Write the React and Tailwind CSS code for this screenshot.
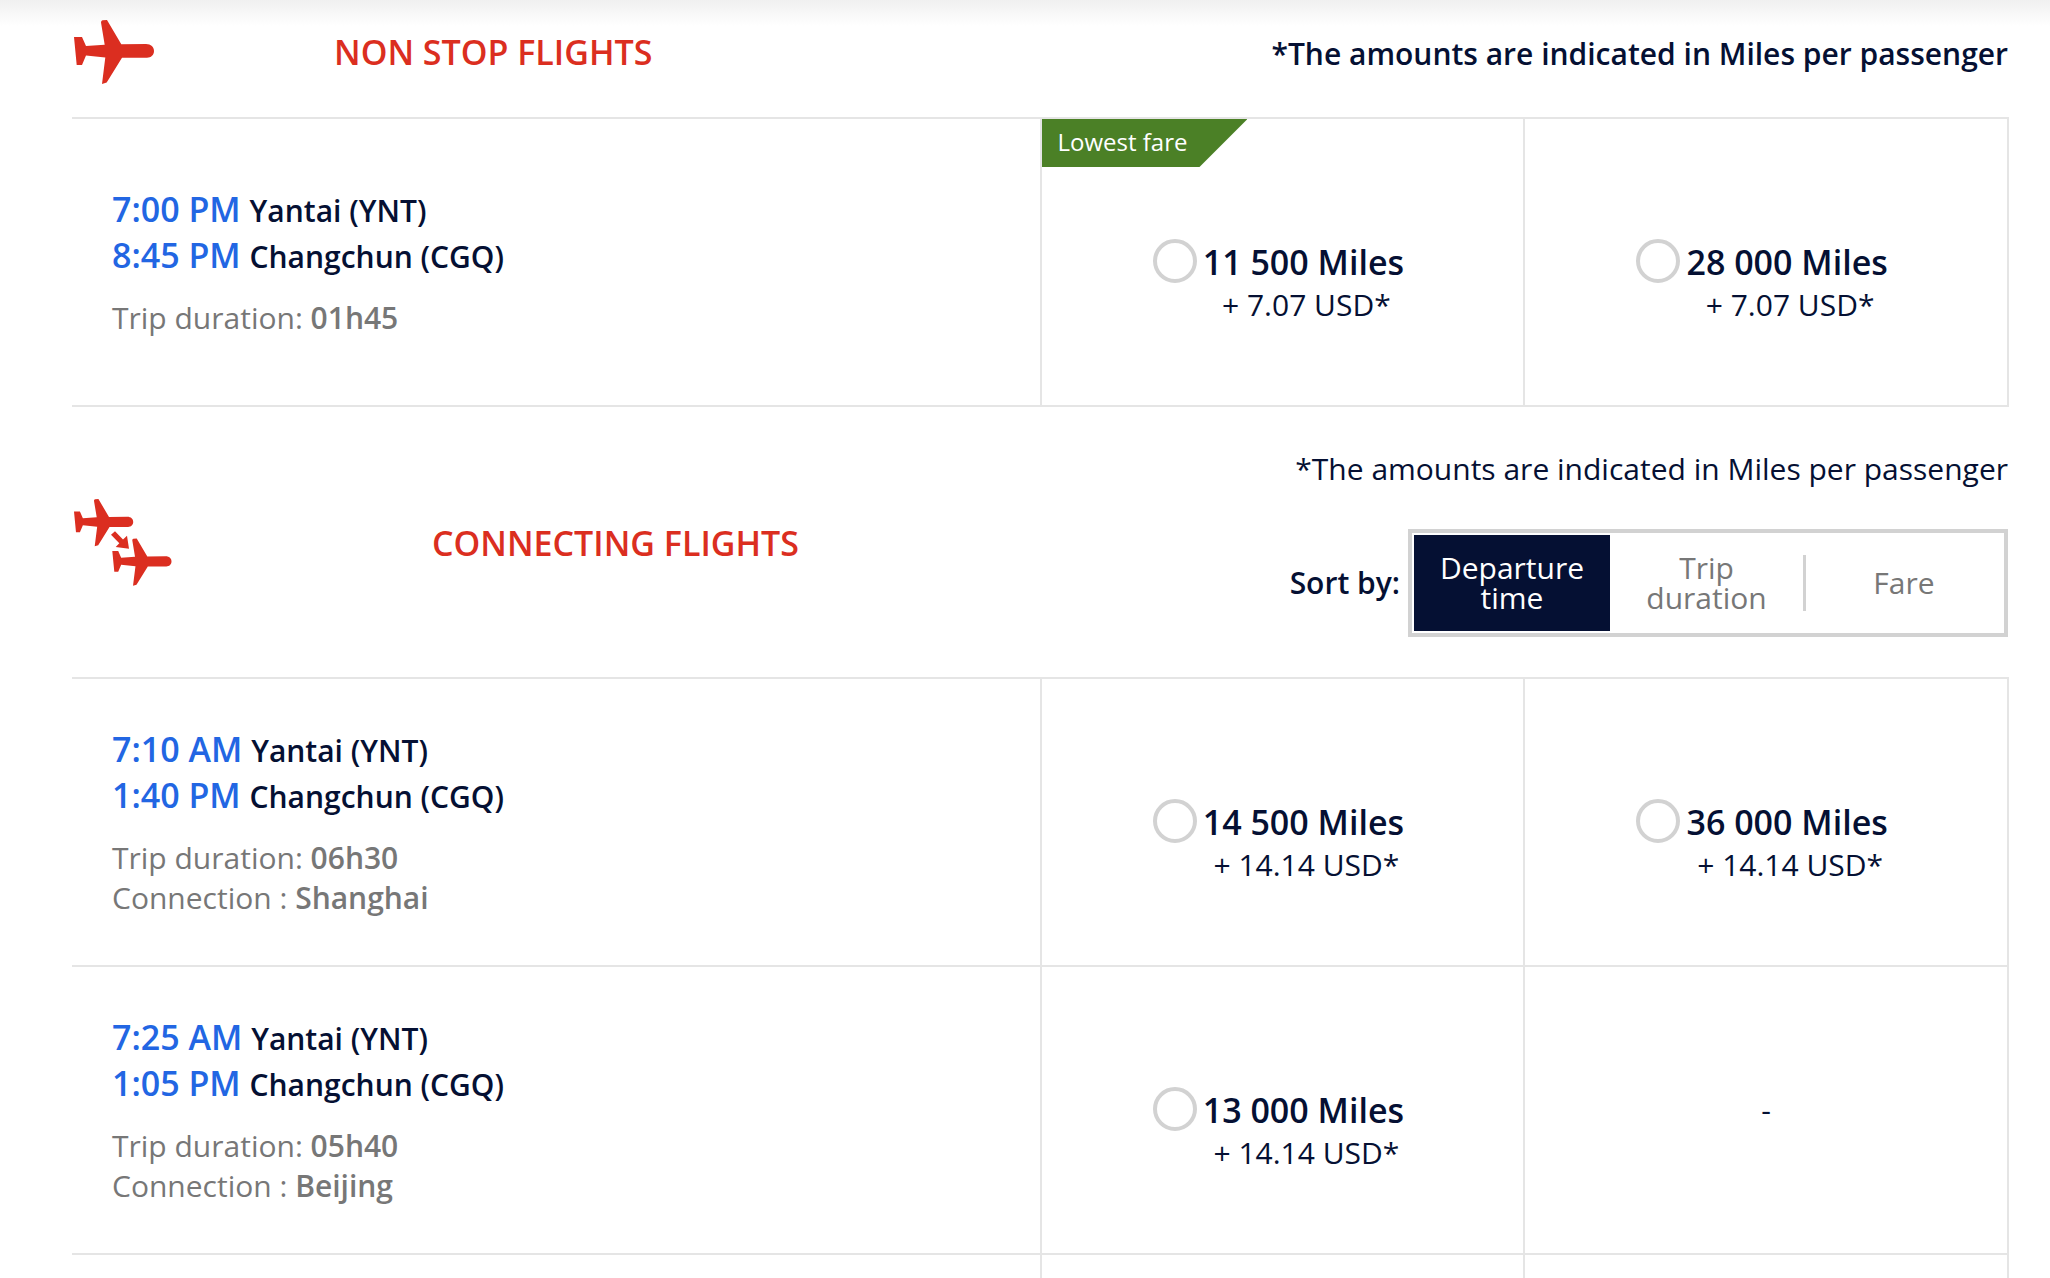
import { useState } from "react";

const PLANE =
  "M0 17H8L12 26L30.7 24.7L27 2.5Q27 .6 28.5 .3L33 0L47.3 24.3L72 24C77 24 80 27 80 31C80 35 77 37.7 73 37.7L48 37.8L32.7 62.4L28 64L31.3 37.6L12 35.5L8 45H2.7Z";

function PlaneIcon() {
  return (
    <svg viewBox="0 0 80 64" className="h-16 w-20 shrink-0 fill-[#db2e20]" aria-hidden="true">
      <path d={PLANE} />
    </svg>
  );
}

function ConnectingPlanesIcon() {
  return (
    <svg viewBox="0 0 98 88" className="h-[88px] w-[98px] shrink-0 fill-[#db2e20]" aria-hidden="true">
      <path d={PLANE} transform="scale(.74)" />
      <path d={PLANE} transform="translate(38.3 39.5) scale(.74)" />
      <path d="M41 32.3L49 40.5L53 36.7L55 49.7L41.7 48L45.3 44.3L37 35.7Z" />
    </svg>
  );
}

function Price({ name, miles, taxes }) {
  return (
    <label className="flex items-start justify-center gap-1.5 pt-10 pr-2">
      <input
        type="radio"
        name={name}
        className="size-11 shrink-0 appearance-none rounded-full border-4 border-[#d2d2d2] bg-white checked:bg-[#051033]"
      />
      <span className="block text-center">
        <span className="block text-[34px] leading-[46px] font-semibold">{miles} Miles</span>
        <span className="block pl-1.5 text-[30px] leading-10">+ {taxes} USD*</span>
      </span>
    </label>
  );
}

function FlightTable({ name, label, flights, children }) {
  return (
    <div className="border-t-2 border-r-2 border-[#e5e5e5]">
      <table aria-label={label} className="w-full table-fixed border-separate border-spacing-0">
        <colgroup>
          <col className="w-[calc(50%-1px)]" />
          <col className="w-1/4" />
          <col className="w-1/4" />
        </colgroup>
        <tbody>
          {flights.map((f) => (
            <tr key={f.depart} className="h-72">
              <td className="border-b-2 border-[#e5e5e5] pl-10 align-middle">
                {[
                  [f.depart, "Yantai (YNT)"],
                  [f.arrive, "Changchun (CGQ)"],
                ].map(([time, place]) => (
                  <p key={place} className="text-[34px] leading-[46px] font-semibold">
                    <span className="text-[#2266e3]">{time}</span> <span className="text-[30px] leading-10">{place}</span>
                  </p>
                ))}
                <div className="mt-5 text-[30px] leading-10 text-[#777777]">
                  <p>
                    Trip duration: <b className="font-semibold">{f.duration}</b>
                  </p>
                  {f.via && (
                    <p>
                      Connection : <b className="font-semibold">{f.via}</b>
                    </p>
                  )}
                </div>
              </td>
              {f.prices.map((p, i) => (
                <td key={i} className="relative border-b-2 border-l-2 border-[#e5e5e5] text-center align-middle text-[30px] leading-10">
                  {p && p.lowest && (
                    <span className="absolute top-0 left-0 bg-[#4b8026] pr-15 pb-0.5 pl-4 text-2xl leading-[46px] text-white [clip-path:polygon(0_0,100%_0,calc(100%-48px)_100%,0_100%)]">
                      Lowest fare
                    </span>
                  )}
                  {p ? <Price name={name} miles={p.miles} taxes={p.taxes} /> : "-"}
                </td>
              ))}
            </tr>
          ))}
          {children}
        </tbody>
      </table>
    </div>
  );
}

const nonStop = [
  {
    depart: "7:00 PM",
    arrive: "8:45 PM",
    duration: "01h45",
    prices: [
      { miles: "11 500", taxes: "7.07", lowest: true },
      { miles: "28 000", taxes: "7.07" },
    ],
  },
];

const connecting = [
  {
    depart: "7:10 AM",
    arrive: "1:40 PM",
    duration: "06h30",
    via: "Shanghai",
    prices: [
      { miles: "14 500", taxes: "14.14" },
      { miles: "36 000", taxes: "14.14" },
    ],
  },
  {
    depart: "7:25 AM",
    arrive: "1:05 PM",
    duration: "05h40",
    via: "Beijing",
    prices: [{ miles: "13 000", taxes: "14.14" }, null],
  },
];

const sorts = ["Departure time", "Trip duration", "Fare"];

export default function App() {
  const [sort, setSort] = useState(0);
  return (
    <main className="bg-white bg-linear-to-b from-[#f0f0f0] from-0% to-white to-[26px] pr-[41px] pl-[72px] font-['Open_Sans',sans-serif] text-[#051033]">
      <section>
        <header className="flex items-center pt-5 pr-px pb-[33px] pl-0.5">
          <PlaneIcon />
          <div className="flex flex-1 items-baseline justify-between pl-[180px]">
            <h2 className="text-[34px] leading-[46px] font-semibold text-[#db2e20]">NON STOP FLIGHTS</h2>
            <p className="text-[30px] leading-10 font-semibold">*The amounts are indicated in Miles per passenger</p>
          </div>
        </header>
        <FlightTable name="non-stop" label="Non stop flights" flights={nonStop} />
      </section>

      <section>
        <header className="flex items-center justify-between pt-[42px] pr-px pb-10 pl-0.5">
          <div className="flex items-center">
            <ConnectingPlanesIcon />
            <h2 className="pl-[260px] text-[34px] leading-[46px] font-semibold text-[#db2e20]">CONNECTING FLIGHTS</h2>
          </div>
          <div className="flex flex-col items-end gap-10">
            <p className="text-[30px] leading-10">*The amounts are indicated in Miles per passenger</p>
            <div className="flex items-center gap-2">
              <span id="sort-label" className="text-[30px] leading-10 font-semibold">Sort by:</span>
              <div role="group" aria-labelledby="sort-label" className="flex h-[108px] w-[600px] items-center border-4 border-[#d2d2d2] p-0.5">
                {sorts.map((s, i) => (
                  <button
                    key={s}
                    type="button"
                    aria-pressed={sort === i}
                    onClick={() => setSort(i)}
                    className={
                      "flex flex-1 items-center justify-center self-stretch text-[30px] leading-[30px] " +
                      (sort === i ? "bg-[#051033] text-white" : "text-[#777777]")
                    }
                  >
                    <span className="flex-1 px-5">{s}</span>
                    {i === 1 && <span className="h-14 w-[3px] bg-[#d2d2d2]" />}
                  </button>
                ))}
              </div>
            </div>
          </div>
        </header>
        <FlightTable name="connecting" label="Connecting flights" flights={connecting}>
          <tr className="h-[23px]">
            <td />
            <td className="border-l-2 border-[#e5e5e5]" />
            <td className="border-l-2 border-[#e5e5e5]" />
          </tr>
        </FlightTable>
      </section>
    </main>
  );
}
